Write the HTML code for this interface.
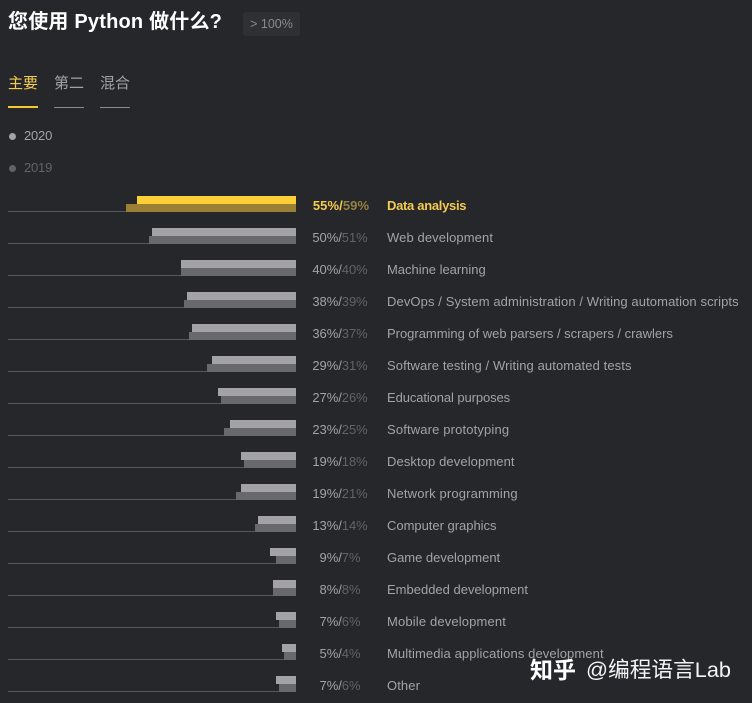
<!DOCTYPE html>
<html><head><meta charset="utf-8"><style>
html,body{margin:0;padding:0;background:#26272b;}
body{position:relative;width:752px;height:703px;overflow:hidden;font-family:"Liberation Sans","Noto Sans CJK SC",sans-serif;color:#a3a3a6;}
.a{position:absolute;white-space:nowrap;}
.l{position:absolute;left:8px;height:1px;background:#56575a;}
.t{position:absolute;height:8px;background:#a3a3a5;right:456px;}
.b{position:absolute;height:8px;background:#69696b;right:456px;}
.p{position:absolute;left:300px;width:80px;text-align:center;font-size:13px;line-height:18px;letter-spacing:-.05px;white-space:nowrap;color:#a3a3a6;}
.p i{font-style:normal;color:#636366;}
.n{position:absolute;left:387px;font-size:13px;line-height:18px;letter-spacing:.1px;white-space:nowrap;color:#a3a3a6;}
</style></head><body>
<div class="a" style="left:8px;top:9px;font-size:20px;line-height:26px;font-weight:bold;color:#fff;letter-spacing:.2px;">您使用 Python 做什么?</div>
<div class="a" style="left:243px;top:12px;width:57px;height:24px;background:#2f3034;border-radius:3px;font-size:12.5px;line-height:24px;text-align:center;color:#8a8a8d;">&gt; 100%</div>
<div class="a" style="left:8px;top:74px;font-size:15px;line-height:20px;color:#f5cb4e;">主要</div>
<div class="a" style="left:54px;top:74px;font-size:15px;line-height:20px;color:#a3a3a6;">第二</div>
<div class="a" style="left:100px;top:74px;font-size:15px;line-height:20px;color:#a3a3a6;">混合</div>
<div class="a" style="left:8px;top:106px;width:30px;height:2px;background:#f5c832;"></div>
<div class="a" style="left:54px;top:107px;width:30px;height:1px;background:#8a8a8c;"></div>
<div class="a" style="left:100px;top:107px;width:30px;height:1px;background:#8a8a8c;"></div>
<div class="a" style="left:9px;top:133px;width:7px;height:7px;border-radius:50%;background:#a3a3a5;"></div>
<div class="a" style="left:24px;top:127px;font-size:13px;line-height:18px;letter-spacing:-.2px;color:#a3a3a6;">2020</div>
<div class="a" style="left:9px;top:165px;width:7px;height:7px;border-radius:50%;background:#636366;"></div>
<div class="a" style="left:24px;top:159px;font-size:13px;line-height:18px;letter-spacing:-.2px;color:#636366;">2019</div>

<div class="l" style="top:211px;width:118px"></div><div class="t" style="top:196px;left:137px;background:#fdcf37"></div><div class="b" style="top:204px;left:126px;background:#9a8034"></div>
<div class="p" style="top:197px;left:301px;color:#f5cb4e;font-weight:bold;letter-spacing:.1px">55%/<i style="color:#94803f">59%</i></div><div class="n" style="top:197px;color:#f5cb4e;font-weight:bold;letter-spacing:-.3px">Data analysis</div>

<div class="l" style="top:243px;width:141px"></div><div class="t" style="top:228px;left:152px"></div><div class="b" style="top:236px;left:149px"></div>
<div class="p" style="top:229px">50%/<i>51%</i></div><div class="n" style="top:229px">Web development</div>

<div class="l" style="top:275px;width:173px"></div><div class="t" style="top:260px;left:181px"></div><div class="b" style="top:268px;left:181px"></div>
<div class="p" style="top:261px">40%/<i>40%</i></div><div class="n" style="top:261px;letter-spacing:-.02px">Machine learning</div>

<div class="l" style="top:307px;width:176px"></div><div class="t" style="top:292px;left:187px"></div><div class="b" style="top:300px;left:184px"></div>
<div class="p" style="top:293px">38%/<i>39%</i></div><div class="n" style="top:293px">DevOps / System administration / Writing automation scripts</div>

<div class="l" style="top:339px;width:181px"></div><div class="t" style="top:324px;left:192px"></div><div class="b" style="top:332px;left:189px"></div>
<div class="p" style="top:325px">36%/<i>37%</i></div><div class="n" style="top:325px;letter-spacing:-.02px">Programming of web parsers / scrapers / crawlers</div>

<div class="l" style="top:371px;width:199px"></div><div class="t" style="top:356px;left:212px"></div><div class="b" style="top:364px;left:207px"></div>
<div class="p" style="top:357px">29%/<i>31%</i></div><div class="n" style="top:357px">Software testing / Writing automated tests</div>

<div class="l" style="top:403px;width:213px"></div><div class="t" style="top:388px;left:218px"></div><div class="b" style="top:396px;left:221px"></div>
<div class="p" style="top:389px">27%/<i>26%</i></div><div class="n" style="top:389px;letter-spacing:-.1px">Educational purposes</div>

<div class="l" style="top:435px;width:216px"></div><div class="t" style="top:420px;left:230px"></div><div class="b" style="top:428px;left:224px"></div>
<div class="p" style="top:421px">23%/<i>25%</i></div><div class="n" style="top:421px;letter-spacing:.15px">Software prototyping</div>

<div class="l" style="top:467px;width:236px"></div><div class="t" style="top:452px;left:241px"></div><div class="b" style="top:460px;left:244px"></div>
<div class="p" style="top:453px">19%/<i>18%</i></div><div class="n" style="top:453px">Desktop development</div>

<div class="l" style="top:499px;width:228px"></div><div class="t" style="top:484px;left:241px"></div><div class="b" style="top:492px;left:236px"></div>
<div class="p" style="top:485px">19%/<i>21%</i></div><div class="n" style="top:485px;letter-spacing:.15px">Network programming</div>

<div class="l" style="top:531px;width:247px"></div><div class="t" style="top:516px;left:258px"></div><div class="b" style="top:524px;left:255px"></div>
<div class="p" style="top:517px">13%/<i>14%</i></div><div class="n" style="top:517px;letter-spacing:-.02px">Computer graphics</div>

<div class="l" style="top:563px;width:268px"></div><div class="t" style="top:548px;left:270px"></div><div class="b" style="top:556px;left:276px"></div>
<div class="p" style="top:549px">9%/<i>7%</i></div><div class="n" style="top:549px;letter-spacing:-.02px">Game development</div>

<div class="l" style="top:595px;width:265px"></div><div class="t" style="top:580px;left:273px"></div><div class="b" style="top:588px;left:273px"></div>
<div class="p" style="top:581px">8%/<i>8%</i></div><div class="n" style="top:581px;letter-spacing:0">Embedded development</div>

<div class="l" style="top:627px;width:271px"></div><div class="t" style="top:612px;left:276px"></div><div class="b" style="top:620px;left:279px"></div>
<div class="p" style="top:613px">7%/<i>6%</i></div><div class="n" style="top:613px;letter-spacing:.15px">Mobile development</div>

<div class="l" style="top:659px;width:276px"></div><div class="t" style="top:644px;left:282px"></div><div class="b" style="top:652px;left:284px"></div>
<div class="p" style="top:645px">5%/<i>4%</i></div><div class="n" style="top:645px">Multimedia applications development</div>

<div class="l" style="top:691px;width:271px"></div><div class="t" style="top:676px;left:276px"></div><div class="b" style="top:684px;left:279px"></div>
<div class="p" style="top:677px">7%/<i>6%</i></div><div class="n" style="top:677px">Other</div>

<div class="a" style="left:530px;top:655px;font-size:23px;line-height:30px;color:#fff;font-weight:bold;">知乎</div>
<div class="a" style="left:586px;top:655px;font-size:21.7px;line-height:30px;color:#f4f4f4;">@编程语言Lab</div>
</body></html>
